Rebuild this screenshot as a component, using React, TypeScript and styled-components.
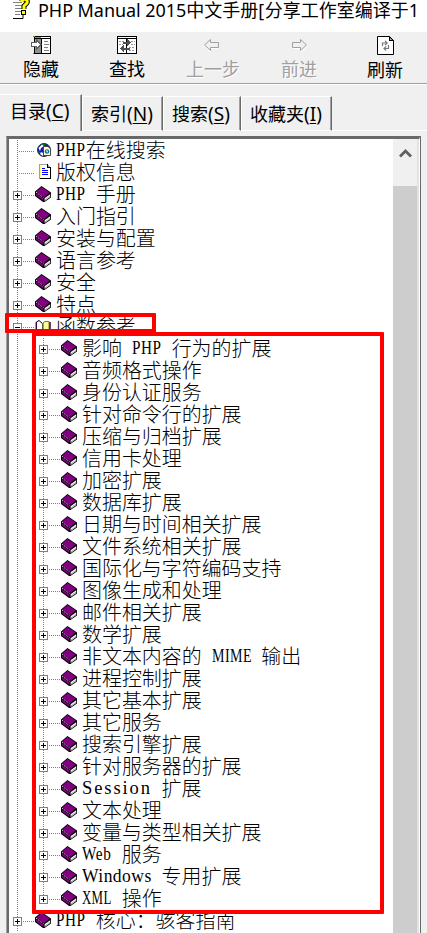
import React from "react";
import styled, { createGlobalStyle } from "styled-components";

const Global = createGlobalStyle`
  html, body { margin: 0; padding: 0; background: #f0f0f0; overflow: hidden; }
  * { box-sizing: border-box; }
`;

const Window = styled.div`
  position: relative;
  width: 427px;
  height: 933px;
  overflow: hidden;
  display: flex;
  flex-direction: column;
  background: #f0f0f0;
  color: #000;
  font-family: "Noto Sans", "Noto Sans CJK SC", sans-serif;
  font-weight: 400;
`;

const TitleBar = styled.header`
  flex: none;
  height: 32px;
  display: flex;
  background: #fff;
  white-space: nowrap;
  padding-left: 12px;
`;

const Title = styled.div`
  margin-left: 8px;
  height: 18px;
  line-height: 18px;
  font-size: 18px;
  font-family: "Noto Sans CJK SC", sans-serif;
`;

const Latin = styled.span<{ $spacing?: number; $size?: number }>`
  font-family: "Noto Sans", sans-serif;
  font-size: ${(p) => p.$size ?? 18}px;
  letter-spacing: ${(p) => p.$spacing ?? 0}px;
`;

const Toolbar = styled.div`
  flex: none;
  height: 53px;
  display: flex;
  margin-left: -2px;
  border-bottom: 1px solid #fff;
  box-shadow: inset 0 -1px #a0a0a0;
`;

const ToolButton = styled.div<{ $disabled?: boolean }>`
  flex: none;
  width: 86px;
  padding-top: 4px;
  display: flex;
  flex-direction: column;
  align-items: center;
  font-family: "Noto Sans CJK SC", sans-serif;
  font-size: 18px;
  line-height: 24px;
  color: ${(p) => (p.$disabled ? "#a0a0a0" : "#000")};
  text-shadow: ${(p) => (p.$disabled ? "1px 1px #fff" : "none")};
  svg { flex: none; margin-bottom: 2px; }
`;

const Tabs = styled.div`
  flex: none;
  height: 46px;
  padding-top: 9px;
  display: flex;
  align-items: flex-end;
`;

const Tab = styled.div<{ $w: number; $active?: boolean }>`
  flex: none;
  width: ${(p) => p.$w}px;
  height: ${(p) => (p.$active ? 37 : 35)}px;
  padding: ${(p) => (p.$active ? "3px 0 0 10px" : "4px 0 0 8px")};
  border-top: 1px solid #fff;
  border-right: 1px solid #696969;
  border-bottom: ${(p) => (p.$active ? "0" : "1px solid #fff")};
  border-left: ${(p) => (p.$active ? "0" : "1px solid #fff")};
  box-shadow: inset -1px 0 #a0a0a0;
  font-family: "Noto Sans CJK SC", sans-serif;
  font-size: 18px;
  line-height: 24px;
  white-space: nowrap;
  u { text-underline-offset: 2px; text-decoration-thickness: 1px; }
`;

const TabFiller = styled.div`
  flex: 1;
  height: 35px;
  border-bottom: 1px solid #fff;
`;

const Pane = styled.div`
  flex: none;
  height: 810px;
  margin: 5px 6px 0 6px;
  border-left: 1px solid #a0a0a0;
  border-top: 1px solid #696969;
  border-right: 1px solid #696969;
  display: flex;
`;

const PaneInner = styled.div`
  flex: 1;
  display: flex;
  border-top: 2px solid #696969;
  border-left: 2px solid #696969;
  border-right: 1px solid #fff;
  background: #fff;
  overflow: hidden;
`;

const Tree = styled.div`
  flex: 1;
  padding-top: 1px;
  overflow: hidden;
`;

const ScrollBar = styled.div`
  flex: none;
  width: 26px;
  height: 100%;
  background: #f0f0f0;
  border-right: 2px solid #e3e3e3;
  display: flex;
  flex-direction: column;
`;

const ScrollArrow = styled.div`
  height: 47px;
  padding: 9px 0 0 6px;
  svg { display: block; }
`;

const Thumb = styled.div`
  flex: 1;
  background: #cdcdcd;
`;

const TreeRow = styled.div`
  height: 22px;
  display: flex;
  white-space: nowrap;
`;

const Gutter = styled.svg`
  flex: none;
  display: block;
`;

const Label = styled.span`
  display: flex;
  height: 20px;
  line-height: 20px;
  padding-left: 4px;
  font-family: "Noto Sans CJK SC", sans-serif;
  font-weight: 300;
  font-size: 19.95px;
  color: #000;
`;

/* Latin words take half the width of an ideograph per letter. */
const WordCell = styled.span<{ $cells: number; $lead: boolean }>`
  display: block;
  flex: none;
  width: ${(p) => p.$cells * 9.95}px;
  padding-left: ${(p) => (p.$lead ? 10 : 0)}px;
`;

const Word = styled.span<{ $scale: number; $gap: number }>`
  display: block;
  width: max-content;
  white-space: pre;
  font-family: "Liberation Serif", serif;
  font-weight: 400;
  font-size: 19.5px;
  line-height: 20px;
  letter-spacing: ${(p) => p.$gap}px;
  transform: scaleX(${(p) => p.$scale});
  transform-origin: 0 50%;
`;

const Mark = styled.div<{ $x: number; $y: number; $w: number; $h: number }>`
  position: absolute;
  left: ${(p) => p.$x}px;
  top: ${(p) => p.$y}px;
  width: ${(p) => p.$w}px;
  height: ${(p) => p.$h}px;
  border: 4px solid #f00;
  border-radius: 1px;
`;

const Book = () => (
  <g shapeRendering="auto">
    <path d="M0 5.5 L6.5 0 L16 6.5 V11.5 L9.5 16 H8 L0 10 Z" fill="#000" />
    <path d="M1 5.7 L6.5 1 L14.8 6.6 L9 11.2 Z" fill="#800080" />
    <path d="M1 7.2 L8.3 12.4 V14.8 L1 9.4 Z" fill="#800080" />
    <path d="M1 6.2 L8.6 11.7" stroke="#fff" strokeWidth=".8" strokeDasharray="1.2 1" />
    <path d="M9.6 12.3 L15.2 8.2 V11 L9.6 15 Z" fill="#fff" />
    <path d="M10 13.9 L15 10.2" stroke="#888" strokeWidth=".7" />
  </g>
);

const OpenBook = () => (
  <g shapeRendering="auto">
    <path d="M1.5 4 L4 2.5 L7.5 5.5 V15 L4 12 L1.5 13 Z" fill="#fff" stroke="#000" />
    <path d="M1 4 V12 L3 15" stroke="#800080" fill="none" />
    <path d="M8 5 L10 3.5 L14 3.5 V14 L10 12 L8 15 Z" fill="#ffff9a" stroke="#808000" />
    <path d="M15 4 V15" stroke="#400040" strokeWidth="1.5" />
    <path d="M8 5 V15" stroke="#808080" />
  </g>
);

const PageIcon = () => (
  <g>
    <path d="M4.5 .5 H12 L15.5 4 V14.5 H4.5 Z" fill="#fff" stroke="#a0a0a0" />
    <path d="M15.5 4 V14.5 H4.5" fill="none" stroke="#000" />
    <path d="M12.5 0 V3.5 H16" fill="none" stroke="#000" />
    <path d="M7 4.5 H10 M7 6.5 H13 M7 8.5 H13 M7 10.5 H13" stroke="#00f" strokeWidth="1.2" shapeRendering="auto" />
    <path d="M5.5 1 V14" stroke="#ffff80" />
  </g>
);

const GlobeIcon = () => (
  <g shapeRendering="auto">
    <circle cx="9" cy="8" r="6.5" fill="#1020b0" stroke="#203050" />
    <path d="M3.5 6 L7 2.5 L9 4 L6 6 L5 9 Z M6 10 L8 11 L8 14 L5 12 Z" fill="#fff" />
    <path d="M7 2 L11 1.7 L9 4 Z M3 9 L5 10 L4 12 Z" fill="#087808" />
    <path d="M8.5 4.5 H13 L15.5 7 V13.5 H8.5 Z" fill="#ffffd0" stroke="#444" />
    <circle cx="12" cy="9.5" r="2.3" fill="#0a74a0" />
    <path d="M11 8 L13 9 L12 11 Z" fill="#fff" />
  </g>
);

type Kind = "globe" | "page" | "book" | "open";
interface Item { text: string; kind?: Kind; child?: boolean; last?: boolean }

const icons: Record<Kind, () => React.JSX.Element> = {
  globe: GlobeIcon, page: PageIcon, book: Book, open: OpenBook,
};

/* Horizontal fit and letter gap of each Latin word. */
const fit: Record<string, [number, number]> = {
  PHP: [0.78, 0.6],
  MIME: [0.72, 0.6],
  Session: [0.95, 2],
  Web: [0.78, 0.9],
  Windows: [0.9, 0.5],
  XML: [0.66, 0.5],
};

const child = (text: string): Item => ({ text, child: true });

const items: Item[] = [
  { text: "PHP在线搜索", kind: "globe" },
  { text: "版权信息", kind: "page" },
  { text: "PHP 手册" },
  { text: "入门指引" },
  { text: "安装与配置" },
  { text: "语言参考" },
  { text: "安全" },
  { text: "特点" },
  { text: "函数参考", kind: "open" },
  ...[
    "影响 PHP 行为的扩展", "音频格式操作", "身份认证服务", "针对命令行的扩展",
    "压缩与归档扩展", "信用卡处理", "加密扩展", "数据库扩展", "日期与时间相关扩展",
    "文件系统相关扩展", "国际化与字符编码支持", "图像生成和处理", "邮件相关扩展",
    "数学扩展", "非文本内容的 MIME 输出", "进程控制扩展", "其它基本扩展", "其它服务",
    "搜索引擎扩展", "针对服务器的扩展", "Session 扩展", "文本处理",
    "变量与类型相关扩展", "Web 服务", "Windows 专用扩展",
  ].map(child),
  { text: "XML 操作", child: true, last: true },
  { text: "PHP 核心：骇客指南" },
];

function LatinWord({ text }: { text: string }) {
  const word = text.trim();
  const [scale, gap] = fit[word] ?? [1, 0];
  return (
    <WordCell $cells={text.length} $lead={text.startsWith(" ")}>
      <Word $scale={scale} $gap={gap}>{word}</Word>
    </WordCell>
  );
}

function Row({ item }: { item: Item }) {
  const kind = item.kind ?? "book";
  const Icon = icons[kind];
  const x = item.child ? 34 : 8;
  const expandable = kind === "book" || kind === "open";
  const parts = item.text.split(/([\x20-\x7e]+)/).filter(Boolean);
  return (
    <TreeRow>
      <Gutter width={x + 35} height="22" shapeRendering="crispEdges" fill="none">
        <path d="M8.5 0 V22" stroke="#808080" strokeDasharray="1 1" />
        {item.child && (
          <path d={`M34.5 0 V${item.last ? 11 : 22}`} stroke="#808080" strokeDasharray="1 1" />
        )}
        <path d={`M${x + 2} 11.5 H${x + 17}`} stroke="#808080" strokeDasharray="1 1" />
        {expandable && (
          <>
            <rect x={x - 3.5} y="7.5" width="8" height="8" fill="#fff" stroke="#808080" />
            <path d={`M${x - 2} 11.5 H${x + 3}`} stroke="#000" />
            {kind === "book" && <path d={`M${x + 0.5} 9 V14`} stroke="#000" />}
          </>
        )}
        <g transform={`translate(${x + 18} 2)`}><Icon /></g>
      </Gutter>
      <Label>
        {parts.map((p, i) => (/^[\x20-\x7e]/.test(p) ? <LatinWord key={i} text={p} /> : <span key={i}>{p}</span>))}
      </Label>
    </TreeRow>
  );
}

const HelpIcon = () => (
  <svg width="18" height="20" fill="none">
    <path d="M1 2.5 H10 M3 5.5 H10 M3 8.5 H10 M3 11.5 H9 M3 14.5 H8" stroke="#808080" />
    <path d="M1 18.5 H11 V14" stroke="#000" />
    <path d="M9.5 1 Q10 -1 13 -1 Q16 0 15 3 L12 6 V9" stroke="#000" strokeWidth="5" />
    <path d="M9.5 2 Q10 -1 13 -1 Q16 0 15 3 L12 6 V9" stroke="#ff0" strokeWidth="3" />
    <rect x="9.5" y="10.5" width="4" height="4" fill="#ff0" stroke="#000" />
  </svg>
);

const HideIcon = () => (
  <svg width="20" height="18" fill="none" shapeRendering="crispEdges">
    <rect x="3.5" y=".5" width="16" height="17" fill="#fff" stroke="#000" />
    <path d="M4 1 H10 V17 H4 Z" fill="#909090" />
    <path d="M3 2.5 H20 M10.5 2 V17" stroke="#000" />
    <path d="M13 5.5 H17 M13 8.5 H18 M13 11.5 H17 M13 14.5 H18" stroke="#808080" />
    <path d="M.5 6.5 H5 V3.5 L10 8.5 L5 13.5 V10.5 H.5 Z" fill="#fff" stroke="#606060" />
    <path d="M2 .5 H4 M2 17.5 H3" stroke="#6b8e23" />
  </svg>
);

const FindIcon = () => (
  <svg width="20" height="18" fill="none" shapeRendering="crispEdges">
    <rect x=".5" y=".5" width="19" height="17" fill="#fff" stroke="#000" />
    <path d="M0 2.5 H20 M9.5 2 V17" stroke="#000" />
    <path d="M2 5.5 H7 M2 8.5 H6 M14 5.5 H18 M14 8.5 H18 M12 11.5 H18 M12 14.5 H18" stroke="#999" strokeDasharray="2 1" />
    <path d="M6 5.5 H10 V2.5 L14 6.5 L10 10.5 V7.5 H6 Z M13 13.5 H7 V16.5 L3 12.5 L7 9 V11.5 H13 Z" fill="#505050" />
  </svg>
);

const ArrowIcon = ({ back }: { back?: boolean }) => (
  <svg width="20" height="18" fill="none">
    <g transform={back ? "translate(18 0) scale(-1 1)" : "translate(1 0)"}>
      <path d="M3.5 7.5 H11.5 V4.5 L17.5 10 L11.5 15.5 V12.5 H3.5 Z" stroke="#fff" />
      <path d="M2.5 6.5 H10.5 V3.5 L16.5 9 L10.5 14.5 V11.5 H2.5 Z" stroke="#a0a0a0" fill="#f0f0f0" />
    </g>
  </svg>
);

const RefreshIcon = () => (
  <svg width="17" height="19" fill="none">
    <path d="M.5 .5 H12.5 L16.5 4.5 V18.5 H.5 Z" fill="#fff" stroke="#000" />
    <path d="M12 0 V5 H17 Z" fill="#000" />
    <path d="M13.5 2.5 V3.5 H14.5" stroke="#fff" />
    <path d="M5.5 10 V7 H9.5 M8 4.8 L10.2 7 L8 9.2 M11.5 9 V12.5 H7.5 M9.2 10.3 L7 12.5 L9.2 14.7" stroke="#777" strokeWidth="1.2" />
  </svg>
);

const tabs = [
  { name: "目录", key: "C", w: 82 },
  { name: "索引", key: "N", w: 81 },
  { name: "搜索", key: "S", w: 78 },
  { name: "收藏夹", key: "I", w: 91 },
];

export default function App() {
  return (
    <Window>
      <Global />
      <TitleBar>
        <HelpIcon />
        <Title>
          <Latin $spacing={-0.05}>PHP Manual 2015</Latin>中文手册<Latin $spacing={0.5}>[</Latin>分享工作室编译于<Latin>1</Latin>
        </Title>
      </TitleBar>
      <Toolbar>
        <ToolButton><HideIcon />隐藏</ToolButton>
        <ToolButton><FindIcon />查找</ToolButton>
        <ToolButton $disabled><ArrowIcon back />上一步</ToolButton>
        <ToolButton $disabled><ArrowIcon />前进</ToolButton>
        <ToolButton><RefreshIcon />刷新</ToolButton>
      </Toolbar>
      <Tabs>
        {tabs.map((t, i) => (
          <Tab key={t.key} $w={t.w} $active={i === 0}>
            {t.name}<Latin $size={19}>(<u>{t.key}</u>)</Latin>
          </Tab>
        ))}
        <TabFiller />
      </Tabs>
      <Pane>
        <PaneInner>
          <Tree>{items.map((item) => <Row key={item.text} item={item} />)}</Tree>
          <ScrollBar>
            <ScrollArrow>
              <svg width="13" height="11" fill="none">
                <path d="M1 8.5 L6.5 3 L12 8.5" stroke="#606060" strokeWidth="2.8" />
              </svg>
            </ScrollArrow>
            <Thumb />
          </ScrollBar>
        </PaneInner>
      </Pane>
      <Mark $x={5} $y={313} $w={151} $h={20} />
      <Mark $x={32} $y={332} $w={352} $h={582} />
    </Window>
  );
}
